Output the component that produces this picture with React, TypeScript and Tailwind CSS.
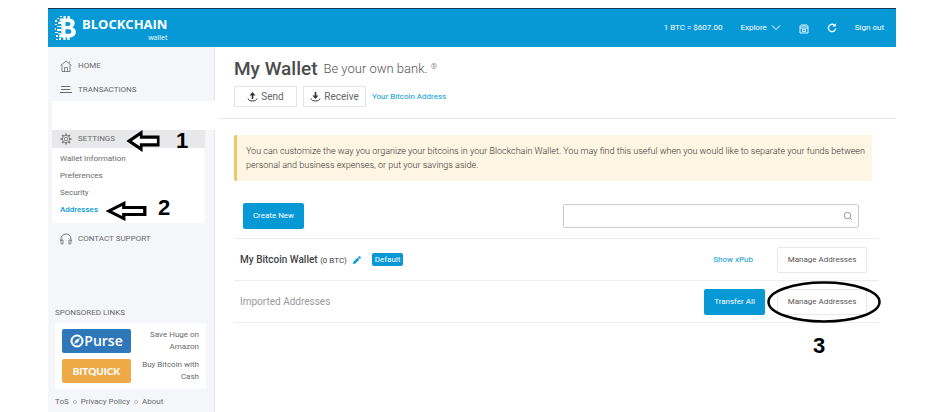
import type { ReactNode } from 'react';

const settingsLinks = [
  { label: 'Wallet Information' },
  { label: 'Preferences' },
  { label: 'Security' },
  { label: 'Addresses', active: true },
];

function BrandMark() {
  return (
    <svg viewBox="0 0 22 26" className="h-[26px] w-[22px]" fill="#fff" aria-hidden="true">
      <path
        fillRule="evenodd"
        d="M5 3.500h3.500V1h2.200v2.500h1.800V1h2.200v2.600c3 .3 5 2 5 4.600 0 1.900-.9 3.200-2.500 4 2.400.7 3.600 2.400 3.600 4.700 0 3.300-2.600 5.400-6.300 5.600V25h-2.200v-2.500h-1.700V25H8.300v-2.500H4.500l-.5-3h2.300v-13H4.500zM10.500 7v4h2.600c1.500 0 2.400-.7 2.400-2s-.9-2-2.400-2zm0 7.300v4.500h3.100c1.700 0 2.700-.8 2.700-2.300s-1-2.200-2.700-2.200z"
      />
      <path d="M0 5h2v2H0zM2 3h2v1H2zM3 7h4v2H3zM0 9h2v1H0zM2 11h4v1H2zM0 13h1v2H0zM2 14h4v2H2zM0 17h3v1H0zM3 18h3v1H3zM1 20h2v2H1zM4 23h2v2H4zM1 24h2v1H1zM5 1h2v1H5z" />
    </svg>
  );
}

function HomeIcon() {
  return (
    <svg viewBox="0 0 12 12" className="size-3" fill="none" stroke="currentColor" aria-hidden="true">
      <path d="M.5 5.500 6 1l5.500 4.500M2 4.500v7h8v-7M4.500 11.500v-4h3v4M9.500 3V1.500" strokeWidth=".8" />
    </svg>
  );
}

function ListIcon() {
  return (
    <svg viewBox="0 0 12 12" className="size-3" fill="none" stroke="currentColor" aria-hidden="true">
      <path d="M1 2.500h9M1 5.500h9M0 8.500h12" strokeWidth="1.200" />
    </svg>
  );
}

function GearIcon() {
  return (
    <svg viewBox="0 0 24 24" className="size-3" fill="none" stroke="currentColor" strokeWidth="1.600" aria-hidden="true">
      <circle cx="12" cy="12" r="3.500" />
      <circle cx="12" cy="12" r="7.500" />
      <path
        d="M12 1v3.500M12 19.500V23M1 12h3.500M19.500 12H23M4.200 4.200l2.500 2.500M17.300 17.300l2.500 2.500M4.200 19.800l2.500-2.500M17.300 6.700l2.500-2.500"
        strokeWidth="2.800"
      />
    </svg>
  );
}

function HeadphonesIcon() {
  return (
    <svg viewBox="0 0 12 12" className="size-3" fill="none" stroke="currentColor" aria-hidden="true">
      <path d="M1 8V6a5 5 0 0 1 10 0v2" strokeWidth=".9" />
      <path d="M1 7h2v4H1.500L1 10zM11 7H9v4h1.500l.5-1z" strokeWidth=".8" />
    </svg>
  );
}

function TransferIcon({ down = false }: { down?: boolean }) {
  return (
    <svg viewBox="0 0 11 10" className="h-[10px] w-[11px]" fill="none" stroke="#333" aria-hidden="true">
      <path d="M1 6.500c.5 1.800 2.300 2.500 4.500 2.500S9.500 8.300 10 6.500" />
      <path d={down ? 'M5.500 0v4' : 'M5.500 7V3'} strokeWidth="1.600" />
      <path d={down ? 'M2.500 3.500h6l-3 3.500z' : 'M2.500 3.500h6l-3-3.500z'} fill="#333" stroke="none" />
    </svg>
  );
}

function ArrowLeft({ className }: { className: string }) {
  return (
    <svg viewBox="0 0 38 20" preserveAspectRatio="none" className={className} fill="#fff" stroke="#000" strokeWidth="3" aria-hidden="true">
      <path d="M3.500 10 17 2.500v4h19v7H17v4z" />
    </svg>
  );
}

function NavItem({ icon, children }: { icon: ReactNode; children: ReactNode }) {
  return (
    <a href="#" className="flex items-center gap-[6px] pl-3 text-[8px] leading-4 text-[#6a6a6a]">
      {icon}
      {children}
    </a>
  );
}

function Header() {
  return (
    <header className="flex h-[39px] items-center justify-between border-t border-[#0b3a5c] bg-[#0799d6] pr-3 pl-[7px] text-white">
      <a href="#" className="flex items-center gap-[5px]">
        <BrandMark />
        <span className="flex flex-col items-end pt-[2px] font-['Open_Sans',sans-serif]">
          <span className="text-[13px] leading-[18px] font-bold">BLOCKCHAIN</span>
          <span className="text-[7px] leading-[10px]">wallet</span>
        </span>
      </a>
      <nav className="flex items-center text-[8px]">
        <span>1 BTC = $607.00</span>
        <button type="button" className="ml-[18px] flex items-center gap-1">
          Explore
          <svg viewBox="0 0 10 6" className="h-[6px] w-[10px]" fill="none" stroke="#fff" aria-hidden="true">
            <path d="m1 .5 4 4 4-4" />
          </svg>
        </button>
        <button type="button" aria-label="Backup" className="ml-[18px]">
          <svg viewBox="0 0 10 11" className="h-[11px] w-[10px]" fill="none" stroke="#fff" strokeWidth=".9" aria-hidden="true">
            <path d="M1 3h8v7H1zM1 5h8M3.500 2.500l-1-1.500M6.500 2.500l1-1.500M5 1v2" />
            <path d="M3.500 6.500h3v2h-3z" />
          </svg>
        </button>
        <button type="button" aria-label="Refresh" className="ml-[18px]">
          <svg viewBox="0 0 10 10" className="size-[10px]" fill="none" stroke="#fff" strokeWidth="1.300" aria-hidden="true">
            <path d="M7.500 2.200A3.700 3.700 0 1 0 8.700 5.500" />
            <path d="M5.500 3.500h3.300V.3z" fill="#fff" stroke="none" />
          </svg>
        </button>
        <button type="button" className="ml-[18px]">Sign out</button>
      </nav>
    </header>
  );
}

function Sidebar() {
  return (
    <aside className="flex w-[167px] shrink-0 flex-col border-r border-[#e3e4e8] bg-[#f5f6fa] text-[#6a6a6a]">
      <div className="flex flex-col gap-2 pt-[11px] pb-[3px]">
        <NavItem icon={<HomeIcon />}>HOME</NavItem>
        <NavItem icon={<ListIcon />}>TRANSACTIONS</NavItem>
      </div>
      <div className="-mr-px ml-1 h-[29px] bg-white" />
      <div className="relative mr-[9px] ml-1 bg-[#e8e8ea] py-px">
        <div className="-ml-1">
          <NavItem icon={<GearIcon />}>SETTINGS</NavItem>
        </div>
        <ArrowLeft className="absolute top-0 left-[74px] h-[22px] w-[34px]" />
        <span className="absolute top-0 left-[124px] font-['Liberation_Sans',sans-serif] text-[22px] leading-[22px] font-bold text-black">1</span>
      </div>
      <ul className="mr-[9px] ml-1 bg-white pt-[2px] pb-[5px] pl-2 text-[8px] leading-[17px]">
        {settingsLinks.map((link) => (
          <li key={link.label} className="relative">
            <a href="#" className={link.active ? 'font-medium text-[#0799d6]' : undefined}>
              {link.label}
            </a>
            {link.active && (
              <>
                <ArrowLeft className="absolute top-0 left-[45px] h-5 w-[42px]" />
                <span className="absolute -top-1 left-[98px] font-['Liberation_Sans',sans-serif] text-[22px] leading-[22px] font-bold text-black">2</span>
              </>
            )}
          </li>
        ))}
      </ul>
      <div className="pt-2">
        <NavItem icon={<HeadphonesIcon />}>CONTACT SUPPORT</NavItem>
      </div>
      <section className="mt-[58px] pl-[7px] text-[8px]">
        <h2 className="leading-4">SPONSORED LINKS</h2>
        <div className="mt-[2px] mr-2 flex flex-col gap-[6px] bg-white px-[7px] py-[6px] leading-3">
          <div className="flex items-center justify-between">
            <a href="#" className="flex h-6 w-[69px] items-center justify-center rounded-xs bg-[#2e77b8] font-['Open_Sans',sans-serif] text-[14px] font-semibold text-white">
              <svg viewBox="0 0 14 14" className="size-[14px]" fill="none" stroke="#fff" strokeWidth="2" aria-hidden="true">
                <circle cx="7" cy="7" r="5.500" />
                <path d="M4.500 9.500 6 6l3.500-1.500L8 8z" fill="#fff" strokeWidth=".5" />
              </svg>
              Purse
            </a>
            <span className="w-[60px] text-right">Save Huge on Amazon</span>
          </div>
          <div className="flex items-center justify-between">
            <a href="#" className="flex h-6 w-[69px] items-center justify-center rounded-xs bg-[#efa947] font-['Lato',sans-serif] text-[10px] font-black text-white">
              BITQUICK
            </a>
            <span className="w-[60px] text-right">Buy Bitcoin with Cash</span>
          </div>
        </div>
      </section>
      <footer className="flex items-center gap-1 pt-[5px] pb-[3px] pl-[7px] text-[8px] leading-4">
        <a href="#">ToS</a>
        <span className="size-1 rounded-full border border-[#bbb]" />
        <a href="#">Privacy Policy</a>
        <span className="size-1 rounded-full border border-[#bbb]" />
        <a href="#">About</a>
      </footer>
    </aside>
  );
}

function WalletHeading() {
  return (
    <div className="border-b border-[#e8e8e8] pt-[10px] pb-[11px] pl-4">
      <h1 className="flex items-center gap-[6px] leading-6">
        <span className="text-[19px] leading-6 font-medium text-[#4c4c4c]">My Wallet</span>
        <span className="text-[13px] font-light text-[#555]">
          Be your own bank. <sup className="text-[8px]">®</sup>
        </span>
      </h1>
      <div className="mt-[5px] flex items-center gap-[6px] text-[10px] text-[#666]">
        <button type="button" className="flex h-[21px] w-[63px] items-center justify-center gap-[3px] border border-[#e5e5e5]">
          <TransferIcon />
          Send
        </button>
        <button type="button" className="flex h-[21px] w-[63px] items-center justify-center gap-[3px] border border-[#e5e5e5]">
          <TransferIcon down />
          Receive
        </button>
        <a href="#" className="text-[8px] text-[#0799d6]">Your Bitcoin Address</a>
      </div>
    </div>
  );
}

function ManageButton() {
  return (
    <button type="button" className="h-[26px] w-[90px] rounded-xs border border-[#e8e8e8] text-[#555]">
      Manage Addresses
    </button>
  );
}

function Addresses() {
  return (
    <div className="pt-4 pr-[17px] pl-4 text-[8px]">
      <p className="mr-[7px] rounded-xs border-l-[3px] border-[#f0c667] bg-[#fff5e3] py-[9px] pl-[9px] text-[9px] leading-[14px] font-light text-[#333]">
        You can customize the way you organize your bitcoins in your Blockchain Wallet. You may find this useful when you would like to separate your funds between personal and business expenses, or put your savings aside.
      </p>
      <div className="flex items-center justify-between border-b border-[#ececec] pt-[22px] pr-5 pb-[9px] pl-[9px]">
        <button type="button" className="h-[26px] w-[61px] rounded-xs bg-[#0799d6] text-white">Create New</button>
        <label className="flex h-6 w-[296px] items-center rounded-xs border border-[#ccc] pr-[5px]">
          <input type="text" aria-label="Search addresses" className="h-full min-w-0 flex-1 px-2 outline-none" />
          <svg viewBox="0 0 10 10" className="size-[10px]" fill="none" stroke="#888" strokeWidth=".9" aria-hidden="true">
            <circle cx="4.500" cy="4.500" r="3.200" />
            <path d="m7 7 2 2" />
          </svg>
        </label>
      </div>
      <div className="flex h-[42px] items-center border-b border-[#ececec] pr-3 pl-[6px]">
        <h2 className="text-[10px] font-medium text-[#444]">
          My Bitcoin Wallet <span className="text-[8px] font-normal">(0 BTC)</span>
        </h2>
        <button type="button" aria-label="Rename wallet" className="ml-[6px] text-[#0799d6]">
          <svg viewBox="0 0 8 8" className="size-2" fill="currentColor" aria-hidden="true">
            <path d="m0 8 .6-2.400L4.500 1.700l1.800 1.800-3.900 3.900zM5 1.200 6 .2h.8l1 1V2l-1 1z" />
          </svg>
        </button>
        <span className="ml-[11px] rounded-xs bg-[#0799d6] px-[3px] leading-[13px] text-white">Default</span>
        <a href="#" className="mr-6 ml-auto text-[#0799d6]">Show xPub</a>
        <ManageButton />
      </div>
      <div className="flex h-[42px] items-center border-b border-[#ececec] pr-3 pl-[6px]">
        <h2 className="text-[10px] text-[#999]">Imported Addresses</h2>
        <button type="button" className="mr-3 ml-auto h-[26px] w-[61px] rounded-xs bg-[#0799d6] text-white">Transfer All</button>
        <div className="relative">
          <ManageButton />
          <svg viewBox="0 0 114 42" className="pointer-events-none absolute -top-2 -left-[10px] h-[42px] w-[114px]" fill="none" stroke="#000" strokeWidth="2.500" aria-hidden="true">
            <ellipse cx="57" cy="21" rx="55.500" ry="19.500" />
          </svg>
          <span className="absolute top-[46px] left-9 font-['Liberation_Sans',sans-serif] text-[22px] leading-[22px] font-bold text-black">3</span>
        </div>
      </div>
    </div>
  );
}

export default function App() {
  return (
    <div className="min-h-screen bg-white pt-2 pr-[54px] pl-12 font-[Roboto,sans-serif]">
      <Header />
      <div className="flex">
        <Sidebar />
        <main className="min-w-0 flex-1 pl-[3px]">
          <WalletHeading />
          <Addresses />
        </main>
      </div>
    </div>
  );
}
